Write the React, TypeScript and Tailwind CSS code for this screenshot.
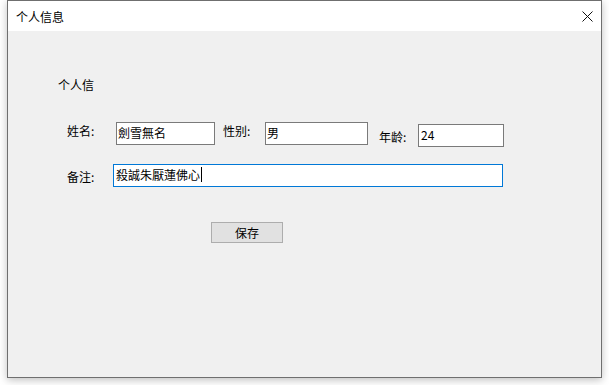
const font = { fontFamily: '"Noto Sans CJK SC", "Noto Sans CJK TC", sans-serif' };

function CloseIcon() {
  return (
    <svg width="11" height="11" viewBox="0 0 11 11" className="block">
      <path d="M0.5 0.5 L10.5 10.5 M10.5 0.5 L0.5 10.5" stroke="#111" strokeWidth="1" />
    </svg>
  );
}

export default function App() {
  return (
    <div className="w-[609px] h-[385px] bg-white text-black text-[12px] leading-[16px]" style={font}>
      <div className="ml-[7px] w-[595px] h-[378px] border border-[#6f6f6f] bg-[#f0f0f0] flex flex-col shadow-[0_2px_8px_rgba(0,0,0,0.25)]">
        <div className="h-[30px] bg-white flex items-center justify-between pl-[8px] pr-[8px] shrink-0">
          <span className="mt-[1px]">个人信息</span>
          <CloseIcon />
        </div>

        <div className="flex flex-col">
          <div className="mt-[46px] ml-[50px]">个人信</div>

          <div className="mt-[29px] flex items-start">
            <span className="ml-[59px] mt-[1px] w-[49px]">姓名:</span>
            <div className="w-[99px] h-[23px] border border-[#7a7a7a] bg-white pl-[1px] pt-[2px] text-[12px]">
              劍雪無名
            </div>
            <span className="ml-[8px] mt-[1px] w-[42px]">性别:</span>
            <div className="w-[103px] h-[23px] border border-[#7a7a7a] bg-white pl-[1px] pt-[2px]">男</div>
            <span className="ml-[11px] mt-[7px] w-[39px]">年龄:</span>
            <div className="mt-[2px] w-[86px] h-[23px] border border-[#7a7a7a] bg-white pl-[2px] pt-[2px]">24</div>
          </div>

          <div className="mt-[17px] flex items-start">
            <span className="ml-[59px] mt-[5px] w-[46px]">备注:</span>
            <div className="w-[390px] h-[23px] border border-[#0078d7] bg-white pl-[2px] pt-[2px] flex items-start">
              <span>殺誠朱厭蓮佛心</span>
              <span className="w-px h-[15px] bg-black ml-px" />
            </div>
          </div>

          <div className="mt-[35px] ml-[203px]">
            <button className="w-[72px] h-[21px] border border-[#adadad] bg-[#e1e1e1] text-[12px] leading-[16px]">
              保存
            </button>
          </div>
        </div>
      </div>
    </div>
  );
}
